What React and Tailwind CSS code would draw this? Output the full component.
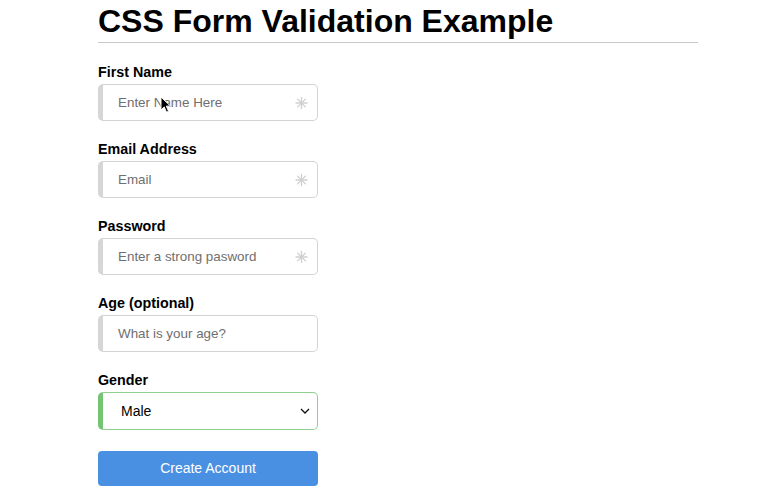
import React from 'react';

const font = { fontFamily: '"Liberation Sans", Arial, sans-serif' };

// thin 8-spoke asterisk drawn in the right of the required fields
const Star = () => (
  <svg width="13" height="13" viewBox="0 0 13 13" className="absolute right-[10px] top-1/2 -translate-y-1/2" aria-hidden="true">
    <g stroke="#cfcfcf" strokeWidth="1.3" strokeLinecap="round">
      <line x1="6.5" y1="1" x2="6.5" y2="12" />
      <line x1="1" y1="6.5" x2="12" y2="6.5" />
      <line x1="2.6" y1="2.6" x2="10.4" y2="10.4" />
      <line x1="10.4" y1="2.6" x2="2.6" y2="10.4" />
    </g>
  </svg>
);

const Field = ({ label, placeholder, required, type = 'text', children }) => (
  <div className="mb-[19px]">
    <label className="block text-[14.3px] leading-[18px] font-bold text-black mb-[3px]">{label}</label>
    <div className="relative w-[220px]">
      {children ?? (
        <input
          type={type}
          placeholder={placeholder}
          className="block w-full h-[37px] rounded-[5px] border border-[#d3d3d3] border-l-[5px] border-l-[#d6d6d6] bg-white pl-[15px] pr-8 text-[13.4px] text-black placeholder:text-[#6f6f6f] outline-none"
        />
      )}
      {required && <Star />}
    </div>
  </div>
);

export default function App() {
  return (
    <div className="min-h-[494px] bg-white" style={font}>
      <div className="ml-[98px] w-[600px] relative">
        <h1 className="text-[32px] leading-[37px] font-bold text-black pt-[3px] pb-[2px] border-b border-[#c8c8c8] mb-[20px]">
          CSS Form Validation Example
        </h1>

        <form onSubmit={e => e.preventDefault()}>
          <Field label="First Name" placeholder="Enter Name Here" required />
          <Field label="Email Address" placeholder="Email" type="email" required />
          <Field label="Password" placeholder="Enter a strong pasword" type="password" required />
          <Field label="Age (optional)" placeholder="What is your age?" type="number" />
          <Field label="Gender">
            <select
              defaultValue="Male"
              className="block w-full h-[38px] appearance-none rounded-[5px] border border-[#8fcf8f] border-l-[5px] border-l-[#74c474] bg-white pl-[18px] pr-8 text-[14px] text-black outline-none"
            >
              <option>Male</option>
              <option>Female</option>
              <option>Other</option>
            </select>
            <svg width="10" height="6" viewBox="0 0 10 6" className="absolute right-[8px] top-1/2 -translate-y-1/2 pointer-events-none" aria-hidden="true">
              <path d="M1 1l4 4 4-4" fill="none" stroke="#111" strokeWidth="1.3" />
            </svg>
          </Field>

          <button
            type="submit"
            className="mt-[21px] block w-[220px] h-[35px] rounded-[4px] bg-[#4a90e2] text-white text-[14px]"
          >
            Create Account
          </button>
        </form>

        {/* mouse pointer over the first input */}
        <svg width="12" height="18" viewBox="0 0 12 18" className="absolute left-[62px] top-[96px] pointer-events-none" aria-hidden="true">
          <path d="M1 1v13l3.2-3.1 2.3 5.3 2.1-.9-2.3-5.2H10.5z" fill="#000" stroke="#fff" strokeWidth="1" strokeLinejoin="round" />
        </svg>
      </div>
    </div>
  );
}
